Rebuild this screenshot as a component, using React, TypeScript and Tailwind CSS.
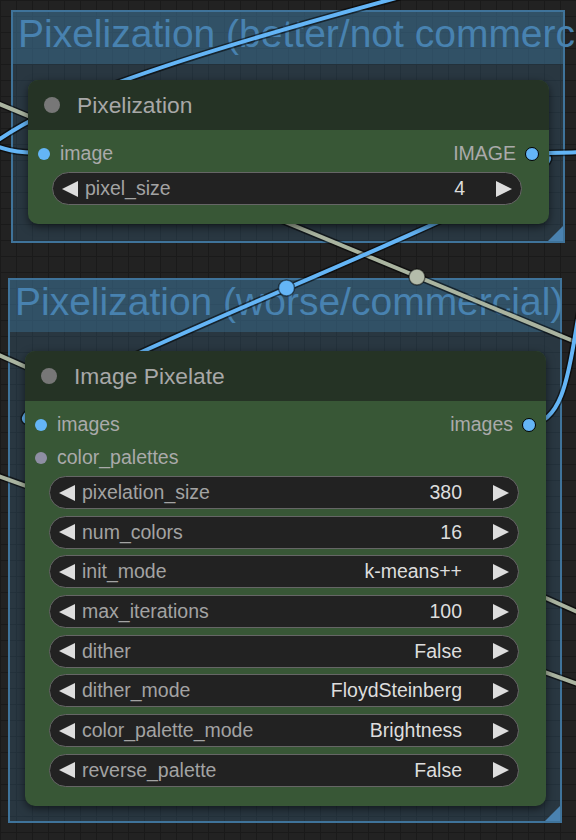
import React from "react";

type Slot = {
  name: string;
  color: string;
};

type Widget = {
  name: string;
  value: string;
};

type Row = {
  input?: Slot;
  output?: Slot;
};

const BLUE = "#64b5f6";
const SAGE = "#aab4a0";

function ArrowLeft() {
  return (
    <svg width="16" height="16" viewBox="0 0 16 16" className="shrink-0">
      <polygon points="16,0 0,8 16,16" fill="#dddddd" />
    </svg>
  );
}

function ArrowRight() {
  return (
    <svg width="16" height="16" viewBox="0 0 16 16" className="shrink-0">
      <polygon points="0,0 16,8 0,16" fill="#dddddd" />
    </svg>
  );
}

function WidgetRow({ widget }: { widget: Widget }) {
  return (
    <div className="flex h-[33px] items-center rounded-full border border-[#666] bg-[#222] pl-[9px] pr-[9px]">
      <ArrowLeft />
      <span className="ml-[7px] flex-1 text-[19.5px] text-[#a3a3a3]">
        {widget.name}
      </span>
      <span className="mr-[31px] text-[19.5px] text-[#dddddd]">
        {widget.value}
      </span>
      <ArrowRight />
    </div>
  );
}

function GraphNode({
  title,
  rows,
  widgets,
  className,
}: {
  title: string;
  rows: Row[];
  widgets: Widget[];
  className: string;
}) {
  return (
    <div
      className={`relative z-20 w-[521px] rounded-[10px] bg-[#385736] shadow-[0_3px_8px_rgba(0,0,0,0.55)] ${className}`}
    >
      <div className="flex h-[50px] items-center rounded-t-[10px] bg-[#253325]">
        <div className="ml-[16px] h-[16px] w-[16px] rounded-full bg-[#777]" />
        <span className="ml-[17px] text-[22.8px] text-[#a8a8a8]">
          {title}
        </span>
      </div>

      <div className="pt-[7px] pb-[19px]">
        {rows.map((row, i) => (
          <div key={i} className="flex h-[33px] items-center justify-between">
            <div className="flex items-center">
              {row.input && (
                <>
                  <div
                    className="ml-[10px] h-[12px] w-[12px] rounded-full"
                    style={{ backgroundColor: row.input.color }}
                  />
                  <span className="ml-[10px] text-[19.5px] text-[#aaa]">
                    {row.input.name}
                  </span>
                </>
              )}
            </div>
            <div className="flex items-center">
              {row.output && (
                <>
                  <span className="mr-[9px] text-[19.5px] text-[#aaa]">
                    {row.output.name}
                  </span>
                  <div
                    className="mr-[10px] h-[14px] w-[14px] rounded-full border-[1.5px] border-black"
                    style={{ backgroundColor: row.output.color }}
                  />
                </>
              )}
            </div>
          </div>
        ))}

        <div className="mt-[2px] flex flex-col gap-[6.7px] pl-[24px] pr-[27px]">
          {widgets.map((w) => (
            <WidgetRow key={w.name} widget={w} />
          ))}
        </div>
      </div>
    </div>
  );
}

function Group({
  title,
  className,
  children,
}: {
  title: string;
  className: string;
  children: React.ReactNode;
}) {
  return (
    <div
      className={`absolute flex flex-col border-2 border-[#3f739a] bg-[#3f789e]/25 ${className}`}
    >
      <div className="h-[52px] shrink-0 whitespace-nowrap bg-[#3f789e]/40 pl-[5px] pt-[2px] text-[39px] leading-[39px] text-[#4882b0]">
        {title}
      </div>
      {children}
      <div className="absolute bottom-0 right-0 h-[15px] w-[15px] bg-[#4a82b0] [clip-path:polygon(100%_0,100%_100%,0_100%)]" />
    </div>
  );
}

function Wire({ d, color }: { d: string; color: string }) {
  return (
    <>
      <path d={d} fill="none" stroke="#000" strokeOpacity={0.55} strokeWidth={7} />
      <path d={d} fill="none" stroke={color} strokeWidth={4} />
    </>
  );
}

function Wires() {
  return (
    <svg
      width="576"
      height="840"
      viewBox="0 0 576 840"
      className="pointer-events-none absolute left-0 top-0 z-10"
    >
      <Wire d="M -15 150 C 40 105, 150 65, 400 -3" color={BLUE} />
      <Wire d="M -20 96 L 600 352" color={SAGE} />
      <Wire d="M -10 351 L 600 622" color={SAGE} />
      <Wire d="M -10 473 L 600 692" color={SAGE} />
      <Wire d="M 532 153 C 672 153, -99 424, 41 424" color={BLUE} />
      <Wire d="M -20 140 C 5 150, 15 153, 44 153" color={BLUE} />
      <Wire d="M 532 153 C 560 153, 580 152, 600 152" color={BLUE} />
      <Wire d="M 529 424 C 560 424, 568 380, 576 330 S 590 290, 600 280" color={BLUE} />

      <circle cx="286.5" cy="288" r="8" fill={BLUE} stroke="#000" strokeOpacity={0.5} strokeWidth={1.5} />
      <circle cx="417" cy="277" r="8" fill="#b4bcaa" stroke="#000" strokeOpacity={0.5} strokeWidth={1.5} />
    </svg>
  );
}

export default function App() {
  return (
    <div className="relative h-[840px] w-[576px] overflow-hidden bg-[#222] bg-[linear-gradient(to_right,#1a1a1a_1px,transparent_1px),linear-gradient(to_bottom,#1a1a1a_1px,transparent_1px)] bg-[size:16px_16px] font-['Liberation_Sans',Arial,sans-serif]">
      <Group
        title="Pixelization (better/not commercial)"
        className="left-[11px] top-[10px] h-[233px] w-[554px]"
      >
        <GraphNode
          className="ml-[15px] mt-[16px]"
          title="Pixelization"
          rows={[
            {
              input: { name: "image", color: BLUE },
              output: { name: "IMAGE", color: BLUE },
            },
          ]}
          widgets={[{ name: "pixel_size", value: "4" }]}
        />
      </Group>

      <Group
        title="Pixelization (worse/commercial)"
        className="left-[8px] top-[278px] h-[545px] w-[554px]"
      >
        <GraphNode
          className="ml-[15px] mt-[19px]"
          title="Image Pixelate"
          rows={[
            {
              input: { name: "images", color: BLUE },
              output: { name: "images", color: BLUE },
            },
            { input: { name: "color_palettes", color: "#8e8ea3" } },
          ]}
          widgets={[
            { name: "pixelation_size", value: "380" },
            { name: "num_colors", value: "16" },
            { name: "init_mode", value: "k-means++" },
            { name: "max_iterations", value: "100" },
            { name: "dither", value: "False" },
            { name: "dither_mode", value: "FloydSteinberg" },
            { name: "color_palette_mode", value: "Brightness" },
            { name: "reverse_palette", value: "False" },
          ]}
        />
      </Group>

      <Wires />
    </div>
  );
}
